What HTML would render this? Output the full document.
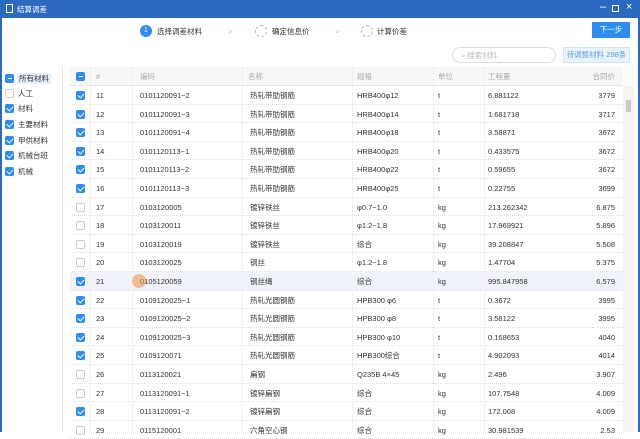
<!DOCTYPE html><html><head><meta charset="utf-8"><style>
*{margin:0;padding:0;box-sizing:border-box}
body{width:640px;height:432px;overflow:hidden;background:#fff;font-family:"Liberation Sans","Noto Sans CJK SC",sans-serif;font-size:7.5px;color:#333;position:relative;line-height:9px}
.a{position:absolute;white-space:nowrap}
.title{left:0;top:0;width:640px;height:18px;background:#2c6ac0;color:#fff}
.cb{position:absolute;width:9px;height:9px;border-radius:2px;border:1px solid #ccc;background:#fff}
.cb.on{background:#2d8cf0;border-color:#2d8cf0}
.cb.on::after{content:"";position:absolute;left:2px;top:0px;width:3px;height:5px;border:solid #fff;border-width:0 1.2px 1.2px 0;transform:rotate(45deg)}
.cb.half{background:#2d8cf0;border-color:#2d8cf0}
.cb.half::after{content:"";position:absolute;left:1.5px;top:3.2px;width:4px;height:1.2px;background:#fff}
.row{position:absolute;left:70px;width:553px;height:18.6px;border-bottom:1px dotted #e2e2e2}
.row span{position:absolute;top:5px;line-height:9px;height:9px}
.vl{position:absolute;top:67px;height:365px;border-left:1px dotted #e6e6e6}
</style></head><body>
<div class="a title"><span class="a" style="left:6px;top:4px;width:7px;height:9px;border:1px solid #fff"></span><span class="a" style="left:17px;top:5px;font-size:7.5px">结算调差</span><span class="a" style="left:600px;top:3px;font-size:11px">–</span><span class="a" style="left:612px;top:5px;width:7px;height:7px;border:1.3px solid #fff"></span><span class="a" style="left:626px;top:3px;font-size:11px">×</span></div>
<div class="a" style="left:0;top:18px;width:2px;height:414px;background:#2c6ac0"></div>
<div class="a" style="left:638px;top:18px;width:2px;height:414px;background:#2c6ac0"></div>
<div class="a" style="left:140px;top:25px;width:12px;height:12px;border-radius:50%;background:#2d8cf0;color:#fff;text-align:center;line-height:12px;font-size:7px">1</div>
<div class="a" style="left:157px;top:27px">选择调差材料</div>
<div class="a" style="left:228px;top:27px;color:#bbb">&gt;</div>
<div class="a" style="left:255px;top:25px;width:12px;height:12px;border-radius:50%;border:1px dashed #bbb"></div>
<div class="a" style="left:272px;top:27px">确定信息价</div>
<div class="a" style="left:335px;top:27px;color:#bbb">&gt;</div>
<div class="a" style="left:361px;top:25px;width:12px;height:12px;border-radius:50%;border:1px dashed #bbb"></div>
<div class="a" style="left:377px;top:27px">计算价差</div>
<div class="a" style="left:592px;top:22px;width:38px;height:16px;background:#2d8cf0;color:#fff;text-align:center;line-height:16px">下一步</div>
<div class="a" style="left:452px;top:47px;width:104px;height:16px;border:1px solid #ddd;border-radius:8px;color:#bbb;padding:3px 0 0 8px">⌕ 搜索材料</div>
<div class="a" style="left:563px;top:47px;width:67px;height:16px;background:#eaf3fc;border:1px solid #d3e5f8;color:#5aa0e6;text-align:center;line-height:14px">待调整材料 298条</div>
<div class="a" style="left:62px;top:67px;height:365px;border-left:1px solid #e6e6e6"></div>
<div class="a" style="left:17px;top:73px;background:#e3effc;padding:1px 2px">所有材料</div>
<div class="cb half" style="left:5px;top:74px"></div>
<div class="cb" style="left:5px;top:89px"></div><div class="a" style="left:18px;top:89px">人工</div>
<div class="cb on" style="left:5px;top:104px"></div><div class="a" style="left:18px;top:104px">材料</div>
<div class="cb on" style="left:5px;top:120px"></div><div class="a" style="left:18px;top:120px">主要材料</div>
<div class="cb on" style="left:5px;top:136px"></div><div class="a" style="left:18px;top:136px">甲供材料</div>
<div class="cb on" style="left:5px;top:151px"></div><div class="a" style="left:18px;top:151px">机械台班</div>
<div class="cb on" style="left:5px;top:167px"></div><div class="a" style="left:18px;top:167px">机械</div>
<div class="a" style="left:70px;top:67px;width:553px;height:19px;background:#f7f7f7;border-bottom:1px solid #e6e6e6;color:#aaa">
<span class="a" style="left:26px;top:5px">#</span><span class="a" style="left:70px;top:5px">编码</span><span class="a" style="left:178px;top:5px">名称</span><span class="a" style="left:287px;top:5px">规格</span><span class="a" style="left:368px;top:5px">单位</span><span class="a" style="left:418px;top:5px">工程量</span><span class="a" style="right:8px;top:5px">合同价</span></div>
<div class="cb half" style="left:76px;top:72px"></div>
<div class="vl" style="left:90px"></div><div class="vl" style="left:132px"></div><div class="vl" style="left:242px"></div><div class="vl" style="left:352px"></div><div class="vl" style="left:433px"></div><div class="vl" style="left:484px"></div>
<div class="a" style="left:623px;top:86px;width:11px;height:346px;background:#f4f4f4"></div>
<div class="a" style="left:626px;top:100px;width:5px;height:12px;background:#c8c8c8"></div>
<div id="rows"></div>
<script>
var d=[["11","0101120091~2","热轧带肋钢筋","HRB400φ12","t","6.881122","3779",1],
["12","0101120091~3","热轧带肋钢筋","HRB400φ14","t","1.681718","3717",1],
["13","0101120091~4","热轧带肋钢筋","HRB400φ18","t","3.58871","3672",1],
["14","0101120113~1","热轧带肋钢筋","HRB400φ20","t","0.433575","3672",1],
["15","0101120113~2","热轧带肋钢筋","HRB400φ22","t","0.59655","3672",1],
["16","0101120113~3","热轧带肋钢筋","HRB400φ25","t","0.22755","3699",1],
["17","0103120005","镀锌铁丝","φ0.7~1.0","kg","213.262342","6.875",0],
["18","0103120011","镀锌铁丝","φ1.2~1.8","kg","17.969921","5.896",0],
["19","0103120019","镀锌铁丝","综合","kg","39.208847","5.508",0],
["20","0103120025","钢丝","φ1.2~1.8","kg","1.47704","5.375",0],
["21","0105120059","钢丝绳","综合","kg","995.847958","6.579",1],
["22","0109120025~1","热轧光圆钢筋","HPB300 φ6","t","0.3672","3995",1],
["23","0109120025~2","热轧光圆钢筋","HPB300 φ8","t","3.58122","3995",1],
["24","0109120025~3","热轧光圆钢筋","HPB300 φ10","t","0.168653","4040",1],
["25","0109120071","热轧光圆钢筋","HPB300综合","t","4.902093","4014",1],
["26","0113120021","扁钢","Q235B 4×45","kg","2.496","3.907",0],
["27","0113120091~1","镀锌扁钢","综合","kg","107.7548","4.009",0],
["28","0113120091~2","镀锌扁钢","综合","kg","172.008","4.009",1],
["29","0115120001","六角空心钢","综合","kg","30.981539","2.53",0]];
var h="";d.forEach(function(r,i){var t=86+i*18.6;
h+='<div class="row" style="top:'+t+'px;'+(i==10?'background:#f0f4fa':'')+'"><span style="left:26px">'+r[0]+'</span><span style="left:70px">'+r[1]+'</span><span style="left:180px">'+r[2]+'</span><span style="left:287px">'+r[3]+'</span><span style="left:368px">'+r[4]+'</span><span style="left:418px">'+r[5]+'</span><span style="right:8px">'+r[6]+'</span></div><div class="cb'+(r[7]?' on':'')+'" style="left:76px;top:'+(t+5)+'px"></div>';});
document.getElementById("rows").innerHTML=h;
</script>
<div class="a" style="left:132px;top:274px;width:14px;height:14px;border-radius:50%;background:rgba(240,150,80,.6)"></div>
</body></html>
